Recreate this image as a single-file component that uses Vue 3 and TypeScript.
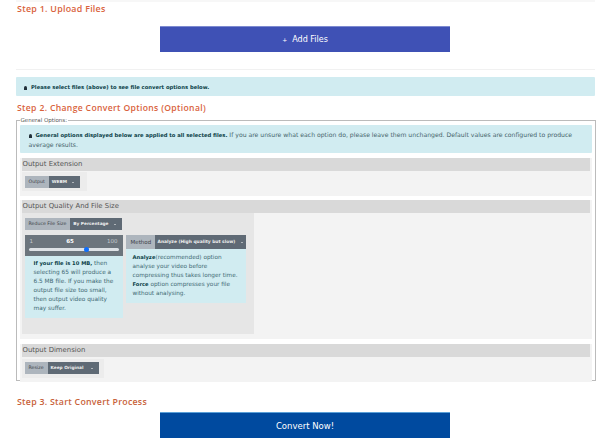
<script setup lang="ts">
interface Sel { label: string; value: string }
const output: Sel = { label: 'Output', value: 'WEBM' }
const resize: Sel = { label: 'Resize', value: 'Keep Original' }
const quality = 65
const sliderPct = ((quality - 1) / 99) * 100
</script>

<template>
  <div class="page">
    <div class="topstrip"></div>
    <h2 class="step first">Step 1. Upload Files</h2>
    <div class="btn-row add-row"><button class="big add"><span class="plus">+</span>&nbsp; Add Files</button></div>
    <hr class="rule" />
    <div class="alert top-alert"><span class="bell"></span><b>Please select files (above) to see file convert options below.</b></div>
    <h2 class="step second">Step 2. Change Convert Options (Optional)</h2>
    <fieldset class="field">
      <legend>General Options:</legend>
      <div class="alert general"><span class="bell"></span><b>General options displayed below are applied to all selected files.</b> If you are unsure what each option do, please leave them unchanged. Default values are configured to produce average results.</div>

      <section class="sec ext">
        <h3>Output Extension</h3>
        <div class="panel small-panel">
          <div class="group">
            <span class="lab">{{ output.label }}</span>
            <span class="val w-ext">{{ output.value }}<i class="caret"></i></span>
          </div>
        </div>
      </section>

      <section class="sec qual">
        <h3>Output Quality And File Size</h3>
        <div class="panel big-panel">
          <div class="group reduce">
            <span class="lab">Reduce File Size</span>
            <span class="val w-red">By Percentage<i class="caret"></i></span>
          </div>
          <div class="cols">
            <div class="col-left">
              <div class="slider">
                <div class="nums"><span class="dim">1</span><b>{{ quality }}</b><span class="dim">100</span></div>
                <div class="track"><div class="knob" :style="{ left: sliderPct + '%' }"></div></div>
              </div>
              <div class="info left-info"><b>If your file is 10 MB,</b> then selecting 65 will produce a 6.5 MB file. If you make the output file size too small, then output video quality may suffer.</div>
            </div>
            <div class="col-right">
              <div class="group method">
                <span class="lab mlab">Method</span>
                <span class="val w-met">Analyze (High quality but slow)<i class="caret"></i></span>
              </div>
              <div class="info right-info"><b>Analyze</b>(recommended) option analyse your video before compressing thus takes longer time. <b>Force</b> option compresses your file without analysing.</div>
            </div>
          </div>
        </div>
      </section>

      <section class="sec dim-sec">
        <h3>Output Dimension</h3>
        <div class="panel small-panel resize-panel">
          <div class="group">
            <span class="lab">{{ resize.label }}</span>
            <span class="val w-res">{{ resize.value }}<i class="caret"></i></span>
          </div>
        </div>
      </section>
    </fieldset>
    <h2 class="step third">Step 3. Start Convert Process</h2>
    <div class="btn-row"><button class="big convert">Convert Now!</button></div>
  </div>
</template>

<style>
html, body { margin: 0; background: #fff; overflow: hidden; }
</style>

<style scoped>
.page {
  width: 600px; height: 439px; overflow: hidden; box-sizing: border-box;
  padding: 0 5px 0 16px;
  font-family: "DejaVu Sans", Verdana, sans-serif;
  color: #444;
}
.topstrip { height: 2px; background: #f7f7f7; }
.step { margin: 0; font-family: "Open Sans", sans-serif; font-size: 8.9px; line-height: 12px; font-weight: 600; color: #d9623c; padding-left: 1px; letter-spacing: 0.03em; white-space: nowrap; }
.step.first { margin-top: 1px; }
.step.second { margin-top: 6px; font-size: 8.6px; letter-spacing: 0.04em; }
.step.third { margin-top: 15px; color: #c8623a; font-size: 8.8px; }
.btn-row { display: flex; justify-content: center; padding-right: 1px; }
.add-row { margin-top: 11px; }
.big { width: 290px; height: 26px; border: 0; padding: 0; color: #fff; font: 8px/24px "DejaVu Sans", sans-serif; }
.add { background: #3f51b5; border-top: 1px solid #7d8ad0; }
.plus { font-size: 6px; }
.convert { background: #004a9f; border-top: 1px solid #5aa0d8; margin-top: 4px; font-size: 8.5px; }
.rule { border: 0; height: 1px; background: #f1f1f1; margin: 17px 0 7px; }
.alert { background: #d1ecf1; color: #46646b; font-size: 6.13px; border-radius: 1px; box-sizing: border-box; }
.alert b { color: #0b3f48; font-size: 5.25px; }
.bell { display: inline-block; width: 3px; height: 4px; background: #22303a; border-radius: 2px 2px 0 0; margin-right: 4px; vertical-align: -0.5px; }
.top-alert { height: 19px; line-height: 19px; padding-left: 8px; }
.field { margin: 3px 0 0 -0.5px; border: 1px solid #bbb; padding: 0 3px 1px; min-inline-size: 0; width: 580px; box-sizing: border-box; height: 264px; }
legend { font-size: 5.5px; line-height: 7px; color: #555; padding: 0 1px; margin-left: 0; }
.general { height: 28px; padding: 5px 6px 0 9px; line-height: 9px; margin-top: 1px; }
.sec { background: #f3f3f3; margin-top: 4px; padding: 0 2px; }
.sec.ext { height: 38px; margin-top: 5px; }
.sec.qual { height: 139px; margin-top: 4px; }
.sec.dim-sec { height: 38px; margin-top: 5px; }
h3 { margin: 0; background: #d9d9d9; font-size: 6.9px; line-height: 13px; height: 13px; padding-left: 1px; font-weight: 400; color: #555; }
.panel { background: #ececec; box-sizing: border-box; }
.small-panel { width: 65px; height: 19px; margin-top: 1px; padding: 4px 3px; }
.resize-panel { width: 82px; margin-top: 2px; padding-top: 3px; }
.big-panel { width: 232px; height: 121px; background: #e6e6e6; padding: 5px 3px; }
.group { display: flex; height: 12px; width: max-content; font-size: 4.7px; line-height: 12px; white-space: nowrap; }
.lab { background: #adb5bd; color: #3c4248; padding: 0 4px; }
.val { background: #5f6a75; color: #eee; padding: 0 3px; display: flex; align-items: center; justify-content: space-between; box-sizing: border-box; font-weight: 700; font-size: 4.3px; }
.caret { display: inline-block; flex: none; border: 1.6px solid transparent; border-top-color: #fff; border-bottom: 0; margin-left: 2px; }
.w-ext { width: 31px; padding-right: 6px; }
.w-red { width: 52px; padding-right: 6px; }
.w-res { width: 51px; padding-right: 6px; }
.w-met { width: 91px; font-size: 4.4px; }
.cols { display: flex; gap: 3px; margin-top: 5px; align-items: flex-start; }
.col-left { width: 98px; }
.col-right { width: 120px; }
.slider { background: #6c757d; height: 21px; padding: 0 4px; box-sizing: border-box; }
.nums { display: flex; justify-content: space-between; color: #fff; font-size: 5.5px; line-height: 12px; padding: 0 1px; }
.dim { color: #c3c9ce; }
.track { position: relative; height: 2.5px; background: #dee2e6; border-radius: 2px; margin-top: 1px; }
.knob { position: absolute; top: -1.5px; width: 5px; height: 5px; margin-left: -2.5px; background: #0d6efd; border-radius: 50%; }
.info { background: #d1ecf1; color: #3f6a74; font-size: 5.8px; line-height: 8.9px; padding: 3px 6px 0 9px; box-sizing: border-box; }
.info b { color: #0b3f48; font-size: 5.2px; }
.left-info { height: 62px; }
.right-info { height: 54px; font-size: 5.75px; padding: 4px 3px 0 7px; }
.method { height: 14px; line-height: 14px; width: 120px; }
.mlab { width: 29px; font-size: 5.5px; box-sizing: border-box; padding: 0 5px; }
</style>
